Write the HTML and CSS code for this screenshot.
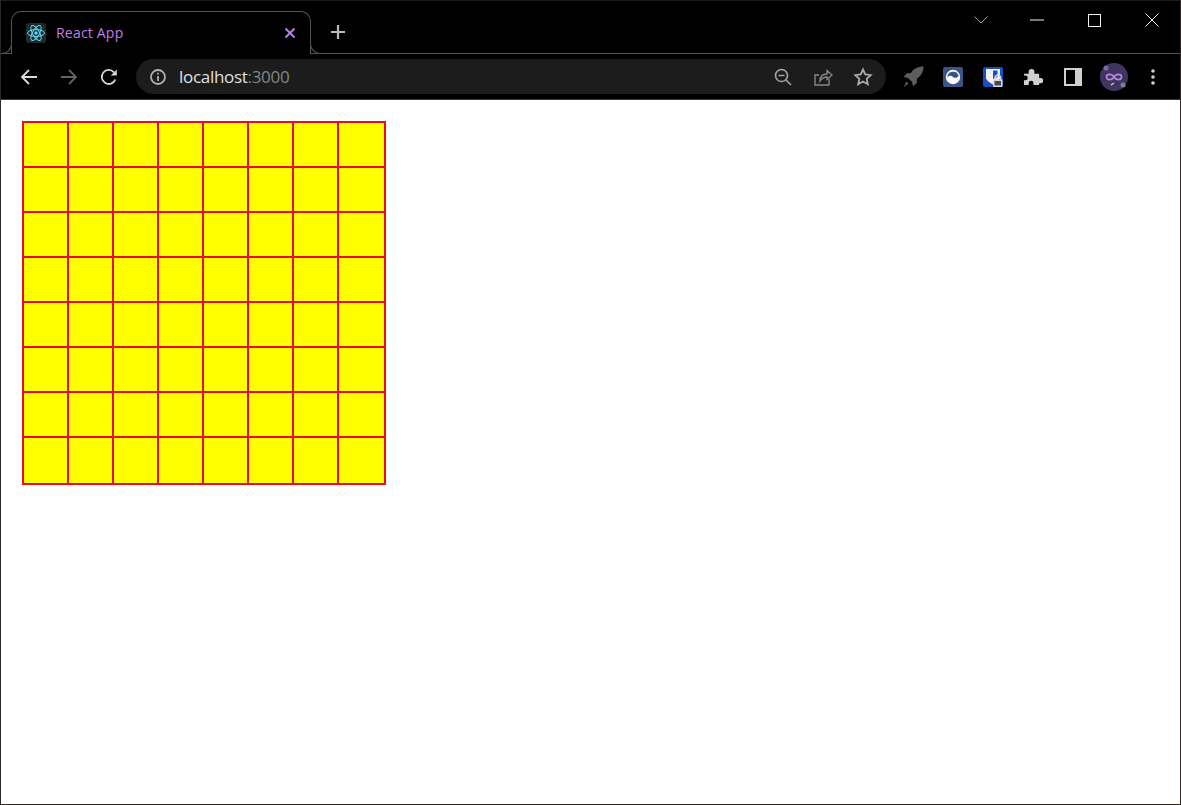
FILE: index.html
```html
<!DOCTYPE html>
<html lang="en">
<head>
<meta charset="UTF-8" />
<meta name="viewport" content="width=device-width, initial-scale=1" />
<title>React App</title>
<link rel="stylesheet" href="styles.css">
</head>
<body>
<div class="window">
  <header class="tabstrip">
    <div class="tab">
      <span class="favicon">
        <svg width="20" height="20" viewBox="0 0 20 20" fill="none" stroke="#61dafb" stroke-width="1">
          <ellipse cx="10" cy="10" rx="8.5" ry="3.4"/>
          <ellipse cx="10" cy="10" rx="8.5" ry="3.4" transform="rotate(60 10 10)"/>
          <ellipse cx="10" cy="10" rx="8.5" ry="3.4" transform="rotate(120 10 10)"/>
          <circle cx="10" cy="10" r="1.7" fill="#61dafb" stroke="none"/>
        </svg>
      </span>
      <span class="tab-title">React App</span>
      <svg class="tab-close" width="12" height="12" viewBox="0 0 12 12" stroke="#bb7ce8" stroke-width="2" fill="none">
        <path d="M1.5 1.5l9 9M10.500 1.500l-9 9"/>
      </svg>
    </div>
    <svg class="new-tab" width="16" height="16" viewBox="0 0 16 16" stroke="#b8b8b8" stroke-width="2.200" fill="none">
      <path d="M8 1v14M1 8h14"/>
    </svg>
    <div class="win-controls">
      <span class="win-btn">
        <svg width="14" height="8" viewBox="0 0 14 8" stroke="#9a9a9a" fill="none"><path d="M.5.5L7 7l6.500-6.500"/></svg>
      </span>
      <span class="win-btn">
        <svg width="14" height="2" viewBox="0 0 14 2" stroke="#f2f2f2" fill="none"><path d="M0 1h14"/></svg>
      </span>
      <span class="win-btn">
        <svg width="13" height="13" viewBox="0 0 13 13" stroke="#f2f2f2" fill="none"><rect x=".5" y=".5" width="12" height="12"/></svg>
      </span>
      <span class="win-btn">
        <svg width="14" height="14" viewBox="0 0 14 14" stroke="#f2f2f2" fill="none"><path d="M.5.5l13 13M13.500.5l-13 13"/></svg>
      </span>
    </div>
  </header>

  <nav class="toolbar">
    <span class="tool">
      <svg width="18" height="18" viewBox="0 0 18 18" stroke="#dcdcdc" stroke-width="1.800" fill="none"><path d="M17 9H2M9 2L2 9l7 7"/></svg>
    </span>
    <span class="tool">
      <svg width="18" height="18" viewBox="0 0 18 18" stroke="#646464" stroke-width="1.800" fill="none"><path d="M1 9h15M9 2l7 7-7 7"/></svg>
    </span>
    <span class="tool">
      <svg width="18" height="18" viewBox="0 0 18 18" stroke="#d6d6d6" stroke-width="1.800" fill="none"><path d="M15.300 11.500A7 7 0 1 1 14 4.300"/><path d="M16.800 1.500v6h-6z" fill="#d6d6d6" stroke="none"/></svg>
    </span>

    <div class="omnibox">
      <svg class="info" width="18" height="18" viewBox="0 0 18 18" fill="none" stroke="#b0b0b0" stroke-width="1.800">
        <circle cx="9" cy="9" r="7"/><path d="M9 8v5"/><path d="M9 4.800v1.800"/>
      </svg>
      <span class="url">localhost<span class="port">:3000</span></span>
      <span class="omni-actions">
        <span class="tool">
          <svg width="20" height="20" viewBox="0 0 20 20" fill="none" stroke="#a0a0a0" stroke-width="1.700"><circle cx="8.500" cy="8.500" r="6"/><path d="M5.500 8.500h6M13 13l5 5"/></svg>
        </span>
        <span class="tool">
          <svg width="20" height="20" viewBox="0 0 20 20" fill="none" stroke="#868686" stroke-width="1.400"><path d="M16 12v6H2V8h4"/><path d="M7 14c0-5 3-7 7-7V3.500L19 8l-5 4.500V10c-3 0-5 1-7 4z"/></svg>
        </span>
        <span class="tool">
          <svg width="20" height="20" viewBox="0 0 20 20" fill="none" stroke="#aaa" stroke-width="1.800"><path d="M10 2.500l2.300 5 5.400.6-4 3.700 1.100 5.400L10 14.500l-4.800 2.700 1.100-5.400-4-3.700 5.400-.6z"/></svg>
        </span>
      </span>
    </div>

    <div class="extensions">
      <span class="tool">
        <svg width="22" height="22" viewBox="0 0 20 20" fill="#5e5e5e"><path d="M19.500.5C14 .5 10.500 2.500 8 6.500H4.500L1.500 10l4 .8 3.700 3.700.8 4 3.500-3v-4c4-2.500 6-6 6-11zM4 14l2 2-4.500 3z"/></svg>
      </span>
      <span class="tool">
        <span class="ext-moon">
          <svg width="16" height="16" viewBox="0 0 16 16">
            <circle cx="8" cy="8" r="7.200" fill="#fff"/>
            <path d="M2.300 8.500C4 6 6 6.500 8 8s3.800 1 5.700-1A5.800 5.800 0 0 0 2.300 8.500z" fill="#3a5585"/>
          </svg>
        </span>
      </span>
      <span class="tool">
        <span class="ext-shield">
          <svg width="20" height="20" viewBox="0 0 20 20">
            <path d="M3 2h14v9.500c-2 3-4.500 4.500-7 6-3-1.500-5.500-3-7-6z" fill="#f2f2f2"/>
            <path d="M10 3.500h4.500v6.500L10 12z" fill="#1a4fc4"/>
            <path d="M12 13v-2a2.800 2.800 0 0 1 5.600 0v2" fill="none" stroke="#dcdcdc" stroke-width="1.400"/>
            <rect x="10" y="12.500" width="9.500" height="7.500" rx="1" fill="#d8d8d8"/>
            <rect x="11.500" y="14" width="6.500" height="4.500" fill="#4a4a4a"/>
          </svg>
        </span>
      </span>
      <span class="tool">
        <svg width="20" height="20" viewBox="0 0 20 20" fill="#d0d0d0"><path d="M1 7h5V5a3 3 0 0 1 6 0v2h5v4.500h2a2.800 2.800 0 0 1 0 5.500h-2v2H11v-2a2.500 2.500 0 0 0-5 0v2H1v-5h1.500a2.500 2.500 0 0 0 0-5H1z" transform="scale(.95)"/></svg>
      </span>
      <span class="tool">
        <svg width="18" height="18" viewBox="0 0 18 18"><path fill="#d0d0d0" d="M0 0h18v18H0z"/><path fill="#000" d="M2 2h9v14H2z"/></svg>
      </span>
      <span class="tool">
        <svg class="avatar" width="28" height="28" viewBox="0 0 28 28" fill="none">
          <circle cx="14" cy="14" r="14" fill="#3f3560"/>
          <circle cx="6" cy="5" r="2.500" fill="#7d6aa0"/>
          <circle cx="23" cy="22" r="2.500" fill="#8a7a90"/>
          <path d="M14 14c-2-3.500-7.500-3.500-7.500 0s5.500 3.500 7.500 0c2-3.500 7.500-3.500 7.500 0s-5.500 3.500-7.500 0z" stroke="#b48ad8" stroke-width="1.600"/>
          <path d="M11 22l3-2" stroke="#ddd" stroke-width="1.200"/>
        </svg>
      </span>
      <span class="tool">
        <svg width="4" height="16" viewBox="0 0 4 16" fill="#d0d0d0"><circle cx="2" cy="2" r="1.800"/><circle cx="2" cy="8" r="1.800"/><circle cx="2" cy="14" r="1.800"/></svg>
      </span>
    </div>
  </nav>

  <main class="page">
    <div class="board" id="board"></div>
  </main>
</div>

<script>
  const board = document.getElementById('board');
  for (let i = 0; i < 64; i++) {
    const cell = document.createElement('div');
    cell.className = 'cell';
    board.appendChild(cell);
  }
</script>
</body>
</html>
```

FILE: styles.css
```css
* { box-sizing: border-box; }
html, body { margin: 0; height: 100%; background: #fff; overflow: hidden; }
body { font-family: "Open Sans", "Noto Sans", sans-serif; }

.window {
  height: 805px;
  display: flex;
  flex-direction: column;
  border-left: 1px solid #2a2a2a;
  border-right: 1px solid #33281f;
  border-bottom: 1px solid #33281f;
  background: #fff;
}

/* tab strip */
.tabstrip {
  height: 54px;
  background: #000;
  border-top: 1px solid #1c1c1c;
  border-bottom: 1px solid #555;
  display: flex;
  align-items: flex-end;
  padding-left: 10px;
  flex-shrink: 0;
}
.tab {
  position: relative;
  width: 300px;
  height: 43px;
  margin-bottom: -1px;
  background: #000;
  border: 1px solid #555;
  border-bottom: 0;
  border-radius: 10px 10px 0 0;
  display: flex;
  align-items: center;
  padding: 0 14px;
}
.tab::before, .tab::after {
  content: "";
  position: absolute;
  bottom: 0;
  width: 10px;
  height: 10px;
  border-bottom: 1px solid #555;
  background: #000;
}
.tab::before { left: -11px; border-right: 1px solid #555; border-bottom-right-radius: 10px; }
.tab::after { right: -11px; border-left: 1px solid #555; border-bottom-left-radius: 10px; }
.favicon {
  width: 20px;
  height: 20px;
  background: #20292e;
  border-radius: 3px;
  display: flex;
}
.tab-title { margin-left: 10px; padding-bottom: 2px; color: #c27ee8; font-size: 14px; letter-spacing: .2px; flex: 1; }
.new-tab { margin: 0 0 13px 19px; }
.win-controls { margin-left: auto; align-self: flex-start; display: flex; }
.win-btn {
  width: 57.5px;
  height: 38px;
  padding-left: 2px;
  display: flex;
  align-items: center;
  justify-content: center;
}
.win-btn:first-child { padding-left: 4px; }

/* toolbar */
.toolbar {
  height: 46px;
  background: #000;
  border-bottom: 1px solid #3a3a3a;
  display: flex;
  align-items: center;
  padding-left: 8px;
  flex-shrink: 0;
}
.tool {
  width: 40px;
  height: 36px;
  display: flex;
  align-items: center;
  justify-content: center;
  flex-shrink: 0;
}
.omnibox {
  width: 750px;
  height: 35px;
  margin-left: 7px;
  background: #1c1c1c;
  border-radius: 18px;
  display: flex;
  align-items: center;
  padding: 0 3px 0 13px;
}
.url { margin-left: 12px; color: #e0e0e0; font-size: 17px; letter-spacing: -.3px; }
.port { color: #858585; }
.omni-actions { margin-left: auto; display: flex; }
.extensions { margin-left: 7px; display: flex; }
.ext-moon {
  width: 20px;
  height: 20px;
  background: #3a5585;
  border-radius: 2px;
  display: flex;
  align-items: center;
  justify-content: center;
}
.ext-shield { width: 20px; height: 20px; background: #1a4fc4; border-radius: 2px; display: flex; }
.avatar { margin-left: 2px; }

/* board */
.page { flex: 1; padding: 21px; }
.board {
  display: grid;
  grid-template-columns: repeat(7, 45px) 47px;
  grid-template-rows: repeat(7, 45px) 47px;
  width: 364px;
  height: 364px;
  background: #ff0;
  border-right: 2px solid #ea0a22;
  border-bottom: 2px solid #ea0a22;
}
.cell {
  border-left: 2px solid #ea0a22;
  border-top: 2px solid #ea0a22;
}
```
